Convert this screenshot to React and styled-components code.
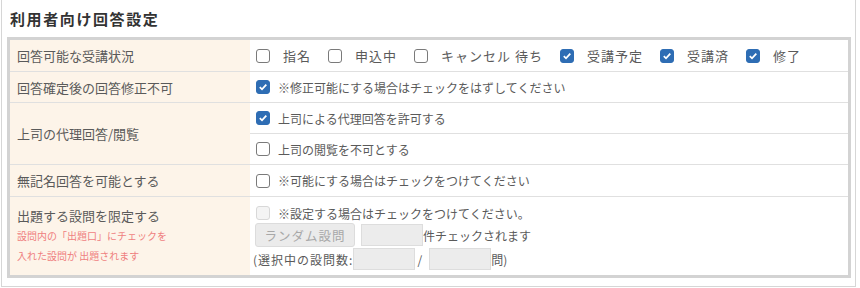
import React from "react";
import styled, { createGlobalStyle } from "styled-components";

const GlobalStyle = createGlobalStyle`
  html, body {
    margin: 0;
    padding: 0;
    background: #fff;
  }
  body {
    font-family: "Noto Sans CJK JP", "Noto Sans", sans-serif;
    color: #5a5a5a;
  }
`;

const Panel = styled.div`
  box-sizing: border-box;
  width: 855px;
  height: 287px;
  margin-left: 1px;
  border: 1px solid #d6d6d6;
  border-top: none;
  padding: 9px 4px 0 5px;
`;

const Title = styled.h2`
  margin: 0 0 8px 3px;
  font-size: 15px;
  line-height: 20px;
  font-weight: 700;
  letter-spacing: 1.6px;
  color: #333;
`;

const Table = styled.div`
  border: 3px solid #d3d3d3;
  display: flex;
  flex-direction: column;
`;

const Row = styled.div`
  display: grid;
  grid-template-columns: 240px 1fr;
  height: ${(p) => p.h}px;
  border-bottom: ${(p) => (p.last ? "none" : "1px solid #e0e0e0")};
  box-sizing: border-box;
`;

const Label = styled.div`
  background: #fdf4e9;
  padding: ${(p) => (p.top ? "9px 0 0 7px" : "0 0 0 7px")};
  display: flex;
  flex-direction: column;
  justify-content: ${(p) => (p.top ? "flex-start" : "center")};
  font-size: 13px;
  color: #5a5a5a;
`;

const Note = styled.div`
  font-size: 10px;
  color: #ef7f7f;
  line-height: 20px;
  margin-top: ${(p) => p.mt || 0}px;
`;

const Cell = styled.div`
  display: flex;
  align-items: center;
  padding-left: 6px;
  font-size: 12px;
  color: #5a5a5a;
`;

const SubCells = styled.div`
  display: flex;
  flex-direction: column;
`;

const SubCell = styled(Cell)`
  flex: 1;
  border-bottom: ${(p) => (p.divider ? "1px solid #e0e0e0" : "none")};
`;

const StatusItem = styled.label`
  display: flex;
  align-items: center;
  margin-right: 17px;
  font-size: 13px;
  letter-spacing: 1px;
`;

const ItemText = styled.span`
  margin-left: ${(p) => p.gap || 8}px;
`;

const Box = styled.span`
  box-sizing: border-box;
  width: 14px;
  height: 14px;
  flex: none;
  border-radius: 3px;
  display: inline-flex;
  align-items: center;
  justify-content: center;
  border: 1px solid ${(p) => (p.checked ? "#2e6db4" : p.disabled ? "#d8d8d8" : "#7a7a7a")};
  background: ${(p) => (p.checked ? "#2e6db4" : p.disabled ? "#f4f4f4" : "#fff")};
`;

const Check = ({ checked, disabled }) => (
  <Box checked={checked} disabled={disabled}>
    {checked && (
      <svg width="10" height="10" viewBox="0 0 10 10">
        <path d="M1.8 5.2 L4 7.3 L8.3 2.6" fill="none" stroke="#fff" strokeWidth="1.8" />
      </svg>
    )}
  </Box>
);

const Limit = styled.div`
  padding: 6px 0 0 5px;
  display: flex;
  flex-direction: column;
  font-size: 12px;
  color: #5a5a5a;
`;

const Line = styled.div`
  display: flex;
  align-items: center;
  height: ${(p) => p.h}px;
  padding-left: ${(p) => p.pl || 0}px;
`;

const CountLabel = styled.span`
  margin-left: -2px;
  letter-spacing: 1px;
`;

const RandomButton = styled.button`
  box-sizing: border-box;
  width: 100px;
  height: 24px;
  margin-right: 6px;
  border: 1px solid #dcdcdc;
  border-radius: 3px;
  background: #ebebeb;
  color: #a8a8a8;
  font-family: inherit;
  font-size: 12.5px;
  letter-spacing: 1px;
  padding: 0;
`;

const NumBox = styled.span`
  box-sizing: border-box;
  display: inline-block;
  width: ${(p) => p.w || 62}px;
  height: ${(p) => p.h || 22}px;
  background: #ececec;
  border: 1px solid #dddddd;
`;

const Slash = styled.span`
  margin: 0 7px 0 2px;
`;

const statuses = [
  { label: "指名", checked: false },
  { label: "申込中", checked: false },
  { label: "キャンセル 待ち", checked: false },
  { label: "受講予定", checked: true },
  { label: "受講済", checked: true },
  { label: "修了", checked: true },
];

export default function App() {
  return (
    <>
      <GlobalStyle />
      <Panel>
        <Title>利用者向け回答設定</Title>
        <Table>
          <Row h={32}>
            <Label>回答可能な受講状況</Label>
            <Cell>
              {statuses.map((s) => (
                <StatusItem key={s.label}>
                  <Check checked={s.checked} />
                  <ItemText gap={13}>{s.label}</ItemText>
                </StatusItem>
              ))}
            </Cell>
          </Row>
          <Row h={31}>
            <Label>回答確定後の回答修正不可</Label>
            <Cell>
              <Check checked />
              <ItemText>※修正可能にする場合はチェックをはずしてください</ItemText>
            </Cell>
          </Row>
          <Row h={62}>
            <Label>上司の代理回答/閲覧</Label>
            <SubCells>
              <SubCell divider>
                <Check checked />
                <ItemText>上司による代理回答を許可する</ItemText>
              </SubCell>
              <SubCell>
                <Check />
                <ItemText>上司の閲覧を不可とする</ItemText>
              </SubCell>
            </SubCells>
          </Row>
          <Row h={32}>
            <Label>無記名回答を可能とする</Label>
            <Cell>
              <Check />
              <ItemText>※可能にする場合はチェックをつけてください</ItemText>
            </Cell>
          </Row>
          <Row h={78} last>
            <Label top>
              <span>出題する設問を限定する</span>
              <Note mt={1}>設問内の「出題口」にチェックを</Note>
              <Note>入れた設問が 出題されます</Note>
            </Label>
            <Limit>
              <Line h={20} pl={1}>
                <Check disabled />
                <ItemText>※設定する場合はチェックをつけてください。</ItemText>
              </Line>
              <Line h={24}>
                <RandomButton disabled>ランダム設問</RandomButton>
                <NumBox />
                <span>件チェックされます</span>
              </Line>
              <Line h={24}>
                <CountLabel>(選択中の設問数:</CountLabel>
                <NumBox />
                <Slash>/</Slash>
                <NumBox />
                <span>問)</span>
              </Line>
            </Limit>
          </Row>
        </Table>
      </Panel>
    </>
  );
}
